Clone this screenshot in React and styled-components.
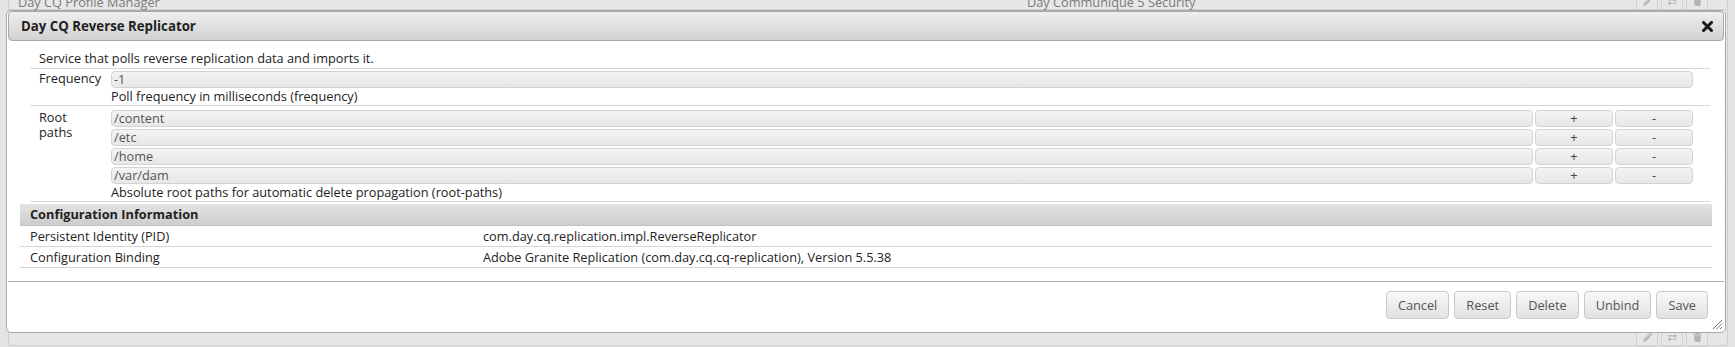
import styled, { createGlobalStyle } from "styled-components";
import { FaPencilAlt, FaExchangeAlt, FaTrash } from "react-icons/fa";

const GlobalStyle = createGlobalStyle`
  body {
    margin: 0;
    background: #e4e4e4;
    font-family: "Open Sans", "Liberation Sans", sans-serif;
  }
`;

const Page = styled.div`
  position: relative;
  width: 1735px;
  height: 347px;
  overflow: hidden;
  background: #e4e4e4;
`;

const BgTable = styled.div`
  margin: -14px 0 0 8px;
  width: 1720px;
  box-sizing: border-box;
  border-left: 1px solid #cfcfcf;
  border-right: 1px solid #cfcfcf;
`;

const BgRow = styled.div`
  display: grid;
  grid-template-columns: 1009px 1fr auto;
  align-items: center;
  height: 24px;
  box-sizing: border-box;
  padding: 6px 19px 0 9px;
  border-bottom: 1px solid #d0d0d0;
  background: #e7e7e7;
  color: #7a7a7a;
  font-size: 12.75px;
`;

const BgActions = styled.div`
  display: flex;
  gap: 3px;
`;

const BgIcon = styled.span`
  display: flex;
  align-items: center;
  justify-content: center;
  width: 20px;
  height: 17px;
  border: 1px solid #d2d2d2;
  border-radius: 3px;
  color: #b5b5b5;
  font-size: 9px;
`;

const Dialog = styled.div`
  position: absolute;
  left: 6px;
  top: 10px;
  width: 1720px;
  height: 323px;
  box-sizing: border-box;
  padding: 0 1px 1px;
  display: flex;
  flex-direction: column;
  background: #fff;
  border: 1px solid #a9a9a9;
  border-radius: 5px;
  color: #222;
  font-size: 12.75px;
`;

const Header = styled.div`
  display: flex;
  align-items: center;
  justify-content: space-between;
  height: 30px;
  box-sizing: border-box;
  padding: 0 10px 0 12px;
  border: 1px solid #aaa;
  border-radius: 4px;
  background: linear-gradient(#eeeeee, #d2d2d2);
  font-size: 13.25px;
  font-weight: 700;
  color: #1f1f1f;
`;

const Content = styled.div`
  flex: 1;
  padding: 7px 12px 0;
`;

const FormTable = styled.div`
  margin: 0 2px 0 10px;
`;

const DescRow = styled.div`
  line-height: 20px;
  padding-left: 9px;
  border-bottom: 1px solid #d6d6d6;
`;

const FieldRow = styled.div`
  display: grid;
  grid-template-columns: 72px 1fr;
  padding: ${(p) => p.$padTop}px 17px 0 9px;
  border-bottom: 1px solid #d6d6d6;
`;

const Label = styled.div`
  width: min-content;
  line-height: 15px;
`;

const Input = styled.div`
  height: 17px;
  box-sizing: border-box;
  padding: 0 2px;
  border: 1px solid #d3d3d3;
  border-radius: 4px;
  background: linear-gradient(#f3f3f3, #e7e7e7);
  color: #555;
  line-height: 15px;
`;

const MultiList = styled.div`
  display: flex;
  flex-direction: column;
  gap: 2px;
`;

const MultiRow = styled.div`
  display: grid;
  grid-template-columns: 1fr 78px 78px;
  gap: 2px;
`;

const SmallButton = styled(Input)`
  text-align: center;
  color: #444;
`;

const Help = styled.div`
  line-height: 17px;
`;

const ConfigHeader = styled.div`
  margin-top: 2px;
  height: 22px;
  box-sizing: border-box;
  padding-left: 10px;
  line-height: 21px;
  font-weight: 700;
  background: linear-gradient(#e3e3e3, #cdcdcd);
  border-bottom: 1px solid #c2c2c2;
`;

const InfoRow = styled.div`
  display: grid;
  grid-template-columns: 453px 1fr;
  padding-left: 10px;
  line-height: 20px;
  border-bottom: 1px solid #d6d6d6;
`;

const ButtonPane = styled.div`
  display: flex;
  justify-content: flex-end;
  gap: 5px;
  padding: 9px 16px 12px;
  border-top: 1px solid #b2b2b2;
`;

const Button = styled.button`
  height: 28px;
  padding: 0 11px;
  border: 1px solid #c9c9c9;
  border-radius: 4px;
  background: linear-gradient(#f8f8f8, #e2e2e2);
  color: #555;
  font-family: "Open Sans", "Liberation Sans", sans-serif;
  font-size: 12.75px;
`;

const Grip = styled.svg`
  position: absolute;
  right: 2px;
  bottom: 2px;
`;

const CloseIcon = () => (
  <svg width="11" height="11" viewBox="0 0 11 11">
    <path d="M1.5 1.5 L9.5 9.5 M9.5 1.5 L1.5 9.5" stroke="#1a1a1a" strokeWidth="3" strokeLinecap="square" />
  </svg>
);

const bgRows = [
  ["Day CQ Profile Manager", "Day Communique 5 Security"],
  ...Array.from({ length: 14 }, () => ["", ""]),
];

const rootPaths = ["/content", "/etc", "/home", "/var/dam"];

const App = () => (
  <Page>
    <GlobalStyle />
    <BgTable>
      {bgRows.map(([name, bundle], i) => (
        <BgRow key={i}>
          <span>{name}</span>
          <span>{bundle}</span>
          <BgActions>
            <BgIcon><FaPencilAlt /></BgIcon>
            <BgIcon><FaExchangeAlt /></BgIcon>
            <BgIcon><FaTrash /></BgIcon>
          </BgActions>
        </BgRow>
      ))}
    </BgTable>

    <Dialog>
      <Header>
        <span>Day CQ Reverse Replicator</span>
        <CloseIcon />
      </Header>
      <Content>
        <FormTable>
          <DescRow>Service that polls reverse replication data and imports it.</DescRow>
          <FieldRow $padTop={2}>
            <Label>Frequency</Label>
            <div>
              <Input>-1</Input>
              <Help>Poll frequency in milliseconds (frequency)</Help>
            </div>
          </FieldRow>
          <FieldRow $padTop={4}>
            <Label>Root paths</Label>
            <div>
              <MultiList>
                {rootPaths.map((p) => (
                  <MultiRow key={p}>
                    <Input>{p}</Input>
                    <SmallButton>+</SmallButton>
                    <SmallButton>-</SmallButton>
                  </MultiRow>
                ))}
              </MultiList>
              <Help>Absolute root paths for automatic delete propagation (root-paths)</Help>
            </div>
          </FieldRow>
        </FormTable>
        <ConfigHeader>Configuration Information</ConfigHeader>
        <InfoRow>
          <span>Persistent Identity (PID)</span>
          <span>com.day.cq.replication.impl.ReverseReplicator</span>
        </InfoRow>
        <InfoRow>
          <span>Configuration Binding</span>
          <span>Adobe Granite Replication (com.day.cq.cq-replication), Version 5.5.38</span>
        </InfoRow>
      </Content>
      <ButtonPane>
        <Button>Cancel</Button>
        <Button>Reset</Button>
        <Button>Delete</Button>
        <Button>Unbind</Button>
        <Button>Save</Button>
      </ButtonPane>
      <Grip width="11" height="11" viewBox="0 0 11 11">
        <path d="M10 1 L1 10 M10 4.5 L4.5 10 M10 8 L8 10" stroke="#777" strokeWidth="1" />
      </Grip>
    </Dialog>
  </Page>
);

export default App;
